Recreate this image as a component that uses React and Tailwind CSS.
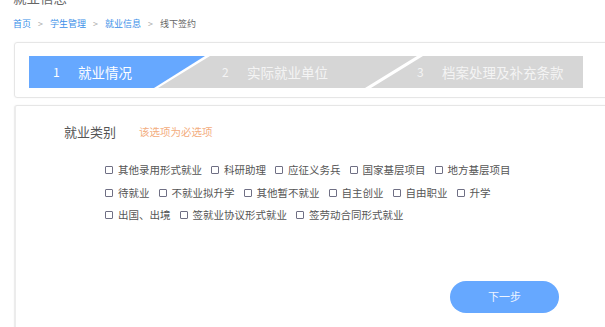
import React from "react";

const rows = [
  ["其他录用形式就业", "科研助理", "应征义务兵", "国家基层项目", "地方基层项目"],
  ["待就业", "不就业拟升学", "其他暂不就业", "自主创业", "自由职业", "升学"],
  ["出国、出境", "签就业协议形式就业", "签劳动合同形式就业"],
];

function Steps() {
  return (
    <div className="flex h-[32px] w-[554px] text-[13.5px] leading-[32px]">
      {/* step 1 - active */}
      <div className="flex h-full w-[176px] shrink-0 bg-[#66a8ff] pl-[24px] text-white [clip-path:polygon(0_0,176px_0,125px_32px,0_32px)]">
        <span className="w-[25px] text-[12px]">1</span>
        <span>就业情况</span>
      </div>
      <div className="-ml-[47px] flex h-full w-[259px] shrink-0 bg-[#d6d6d6] pl-[64px] text-[#f4f4f4] [clip-path:polygon(52px_0,259px_0,207px_32px,0_32px)]">
        <span className="w-[25px] text-[12px]">2</span>
        <span>实际就业单位</span>
      </div>
      <div className="-ml-[46px] flex h-full w-[212px] shrink-0 bg-[#d6d6d6] pl-[46px] text-[#f4f4f4] [clip-path:polygon(52px_0,212px_0,212px_32px,0_32px)]">
        <span className="w-[25px] text-[12px]">3</span>
        <span>档案处理及补充条款</span>
      </div>
    </div>
  );
}

export default function App() {
  return (
    <div
      className="h-[327px] w-[605px] overflow-hidden bg-white pl-[13px]"
      style={{ fontFamily: '"Noto Sans CJK SC", "Noto Sans", sans-serif' }}
    >
      <div className="-mt-[12px] text-[13.5px] leading-[18px] text-[#666]">就业信息</div>

      {/* breadcrumb */}
      <div className="mt-[12px] flex items-center text-[9px] leading-[12px]">
        <span className="text-[#3b8fe8]">首页</span>
        <span className="mx-[7px] text-[#aaa]">&gt;</span>
        <span className="text-[#3b8fe8]">学生管理</span>
        <span className="mx-[7px] text-[#aaa]">&gt;</span>
        <span className="text-[#3b8fe8]">就业信息</span>
        <span className="mx-[7px] text-[#aaa]">&gt;</span>
        <span className="text-[#666]">线下签约</span>
      </div>

      {/* steps card */}
      <div className="ml-[1px] mt-[12px] w-[600px] rounded-[3px] border border-[#e6e6e6] pb-[9px] pl-[14px] pt-[13px] shadow-[0_0_2px_rgba(0,0,0,0.05)]">
        <Steps />
      </div>

      {/* form card */}
      <div className="ml-[1px] mt-[7px] h-[240px] w-[600px] rounded-[3px] border border-[#e6e6e6] border-l-2 border-l-[#ececec] pl-[48px] pt-[17px] shadow-[0_0_2px_rgba(0,0,0,0.05)]">
        <div className="flex items-center leading-[18px]">
          <span className="text-[13px] text-[#555]">就业类别</span>
          <span className="ml-[23px] text-[10.5px] text-[#f3ad80]">该选项为必选项</span>
        </div>

        <div className="ml-[41px] mt-[18px] flex flex-col">
          {rows.map((row, i) => (
            <div key={i} className="flex h-[22.5px] items-center gap-[9px]">
              {row.map((label) => (
                <label key={label} className="flex items-center text-[10.5px] text-[#555]">
                  <span className="mr-[5px] inline-block h-[8px] w-[8px] rounded-[1px] border border-[#6f6f84] bg-white"></span>
                  {label}
                </label>
              ))}
            </div>
          ))}
        </div>

        <button className="ml-[386px] mt-[54px] h-[32px] w-[109px] rounded-full bg-[#66a8ff] text-[11px] text-[#eef4ff]">
          下一步
        </button>
      </div>
    </div>
  );
}
